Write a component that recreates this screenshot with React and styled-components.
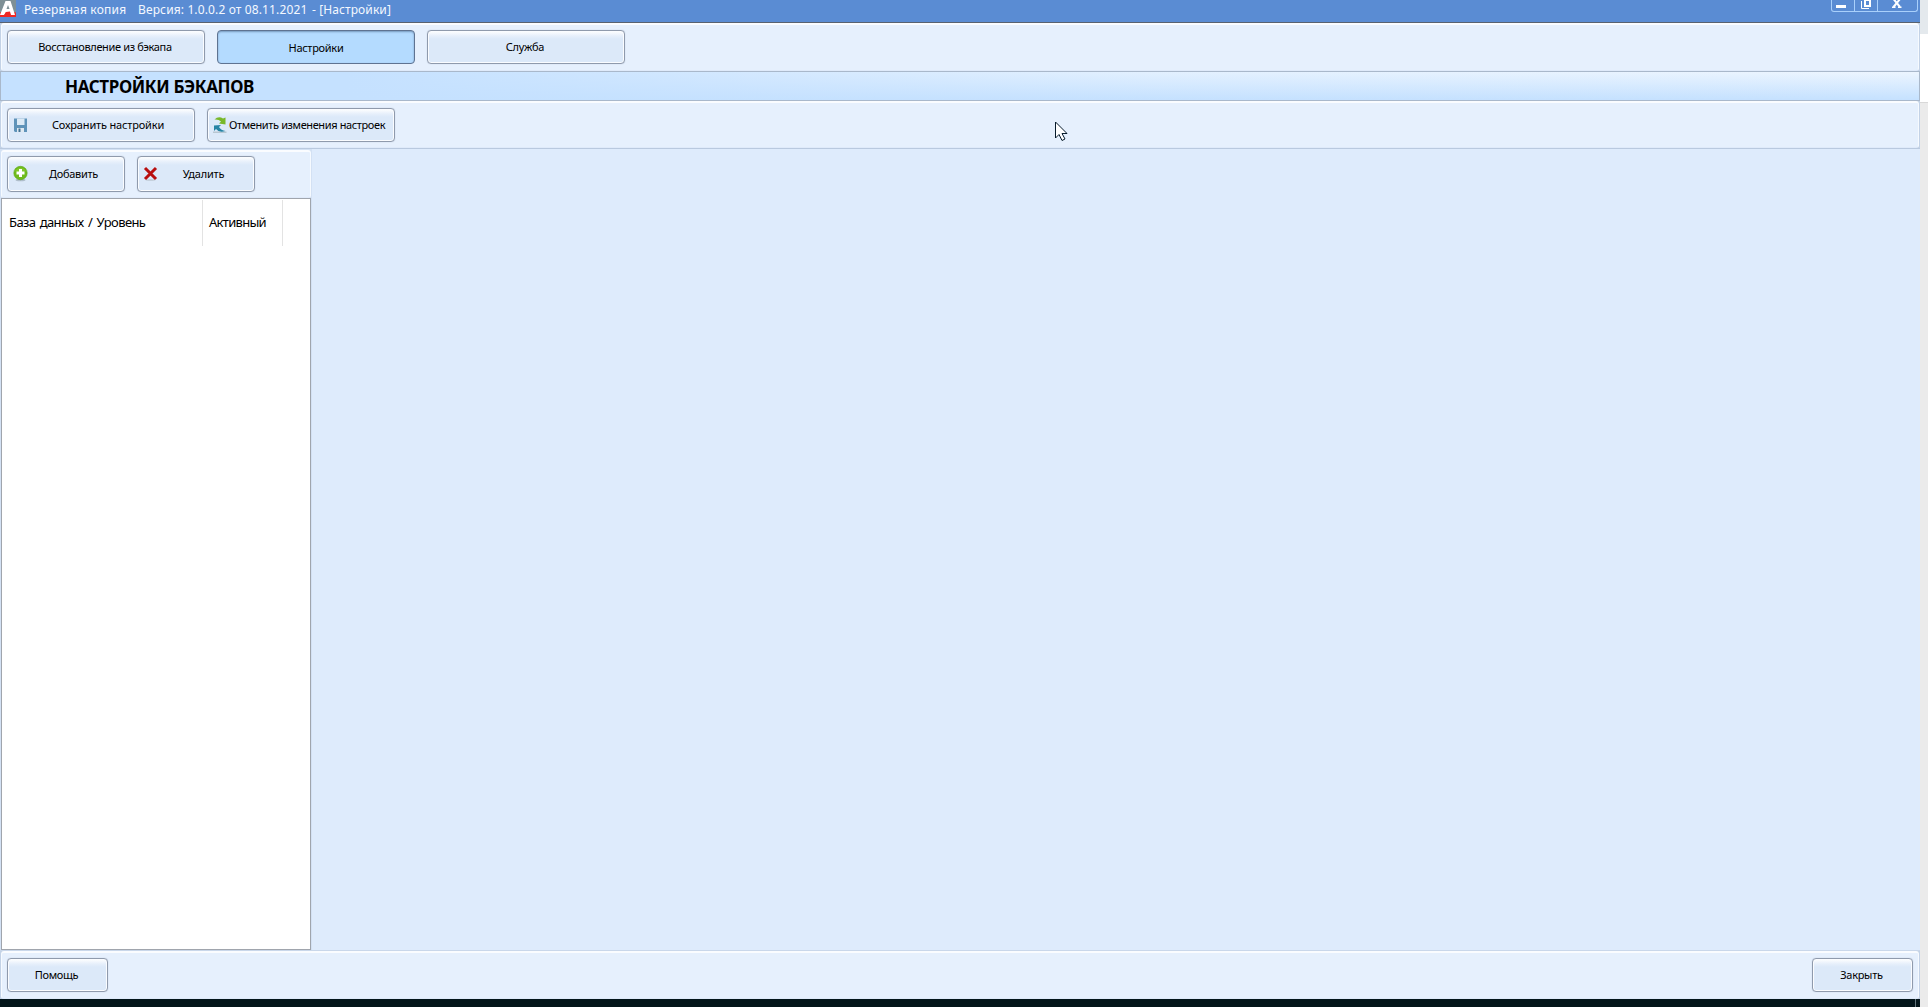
import React from 'react';
import styled, { createGlobalStyle, css } from 'styled-components';

const GlobalStyle = createGlobalStyle`
  * {
    box-sizing: border-box;
  }
  body {
    margin: 0;
    overflow: hidden;
    background: #ebebeb;
    font-family: 'Noto Sans', 'Open Sans', sans-serif;
    color: #000;
  }
`;

const Screen = styled.div`
  width: 1928px;
  height: 1007px;
  display: flex;
`;

const AppWindow = styled.div`
  width: 1920px;
  height: 1007px;
  display: flex;
  flex-direction: column;
  background: #c3d2e6;
`;

const Edge = styled.div`
  width: 8px;
  background: linear-gradient(
    #e4e9ed 0 34px,
    #ffffff 34px 102px,
    #d8d8d8 102px 103px,
    #ebebeb 103px
  );
`;

const TitleBar = styled.div`
  height: 23px;
  flex: none;
  display: flex;
  align-items: flex-start;
  background: #5a8cd3;
  border-bottom: 1px solid #59626f;
`;

const TitleText = styled.div`
  margin-left: 8px;
  width: ${(p) => p.$width}px;
  height: 20px;
  line-height: 19px;
  font-size: 12px;
  letter-spacing: ${(p) => p.$spacing || 0}px;
  color: #f4f8ff;
  white-space: nowrap;
`;

const WindowControls = styled.div`
  display: flex;
  margin-left: auto;
  margin-right: 2px;
  width: 87px;
  height: 12px;
  border: 1px solid #a9d0fb;
  border-top: none;
  border-radius: 0 0 3px 3px;
`;

const Control = styled.div`
  width: ${(p) => p.$width}px;
  height: 11px;
  display: flex;
  padding-left: ${(p) => p.$left}px;
  border-right: ${(p) => (p.$last ? 'none' : '1px solid #a9d0fb')};
`;

const Toolbar = styled.div`
  height: ${(p) => p.$height}px;
  flex: none;
  display: flex;
  align-items: flex-start;
  gap: 12px;
  margin: 0 1px;
  padding: ${(p) => p.$top}px 5px 0;
  background: #e6f0fd;
  border: 1px solid #f6faff;
  border-top: 2px solid #fafcff;
  border-bottom: 1px solid #dfeafa;
  border-radius: 3px;
`;

const Band = styled.div`
  height: 30px;
  flex: none;
  padding-left: 64px;
  border: 1px solid #a9b8cb;
  background:
    linear-gradient(to right, #c5e1ff 18%, rgba(197, 225, 255, 0.25) 60%, rgba(197, 225, 255, 0) 100%),
    linear-gradient(#ecf5ff, #c5e1ff);
`;

const BandTitle = styled.h1`
  margin: 0;
  font-size: 17px;
  line-height: 29px;
  font-weight: 700;
  letter-spacing: -0.38px;
`;

const Button = styled.button`
  width: ${(p) => p.$width}px;
  height: ${(p) => p.$height || 34}px;
  flex: none;
  display: flex;
  align-items: center;
  padding: 0 0 1px 5px;
  border: 1px solid #8f9aac;
  border-radius: 4px;
  background: linear-gradient(#ffffff 0, #e6effb 5px, #dce9f9 8px);
  box-shadow: inset 0 0 0 1px #fafcff, 0 0 1px #a9b5c6;
  font-family: inherit;
  font-size: 11px;
  color: #000;

  ${(p) =>
    p.$active &&
    css`
      padding-top: 2px;
      border-color: #5f7391;
      background: #b4dbff;
      box-shadow: inset 0 1px 2px #7597bc;
    `}
`;

const ButtonIcon = styled.span`
  width: 16px;
  height: 18px;
  flex: none;
  display: flex;
  align-items: center;
`;

const Label = styled.span`
  flex: 1;
  text-align: center;
  white-space: nowrap;
  line-height: 14px;
  letter-spacing: ${(p) => p.$spacing || 0}px;
  padding-right: ${(p) => p.$right ?? 7}px;
`;

const Content = styled.div`
  flex: none;
  height: 803px;
  display: flex;
  background: #deebfc;
  border-top: 1px solid #b9c9df;
  border-bottom: 1px solid #c9d7ea;
`;

const SidePanel = styled.div`
  width: 312px;
  display: flex;
  flex-direction: column;
  background: #d3e1f4;
  padding-top: 1px;
`;

const List = styled.div`
  width: 310px;
  height: 752px;
  margin-left: 1px;
  background: #fff;
  border: 1px solid #a0a5ad;
`;

const ListHeader = styled.div`
  display: flex;
  height: 47px;
  padding-top: 1px;
`;

const HeaderCell = styled.div`
  width: ${(p) => p.$width}px;
  padding-left: ${(p) => p.$left}px;
  border-right: 1px solid #e3e3e3;
  font-size: 13px;
  line-height: 45px;
  letter-spacing: ${(p) => p.$spacing || 0}px;
  word-spacing: 1.5px;
  white-space: nowrap;
`;

const Footer = styled(Toolbar)`
  justify-content: space-between;
`;

const Desktop = styled.div`
  flex: 1;
  display: flex;
  justify-content: flex-end;
  padding-right: 4px;
  background: #03151a;

  &::after {
    content: '';
    width: 1px;
    background: #63757b;
  }
`;

const Pointer = styled.svg`
  position: absolute;
  left: 1055px;
  top: 121px;
`;

const LogoIcon = () => (
  <svg width="16" height="18" viewBox="0 0 16 18">
    <rect width="16" height="17" fill="#7e9096" />
    <path d="M0 12.500Q8 10 16 12.500V17H0Z" fill="#ef2723" />
    <path d="M5.500 1h5L15 15h-4.500l-1-3H6l-2 3H0z" fill="#fff" />
    <path d="M8 5L6.500 9H9.500z" fill="#7e9096" />
    <path d="M6 12l4-.5 1 3.500H4.500z" fill="#ef2723" />
  </svg>
);

const SaveIcon = () => (
  <svg width="15" height="16" viewBox="0 0 15 16">
    <path d="M1 1.500h13V15H2l-1-1z" fill="#5f93b9" />
    <path d="M4 1.500h7.500V8H4z" fill="#dceaf6" />
    <path d="M4 11h7v4H4z" fill="#dfe9f1" />
    <path d="M5.500 11.500h2V15h-2z" fill="#447394" />
  </svg>
);

const RevertIcon = () => (
  <svg width="15" height="18" viewBox="0 0 15 18">
    <path d="M0 15.500h13.500V17H0z" fill="#b9c7d2" />
    <path d="M1.500 3.500Q5.500-.5 10 2.500L12.500 1.500V8.500L6 7.500 8 5.500Q5.500 3 1.500 3.500z" fill="#78b829" />
    <path d="M1 9.500L8 9 6 11Q8 14.500 12.500 15Q6 17 3 13L1 15z" fill="#2684a5" />
  </svg>
);

const AddIcon = () => (
  <svg width="15" height="17" viewBox="0 0 15 17">
    <ellipse cx="7.500" cy="15" rx="5" ry="1.300" fill="#aebdca" />
    <circle cx="7.500" cy="8" r="6.700" fill="#6fbb1c" stroke="#58a812" strokeWidth=".6" />
    <path d="M2 6a6 5 0 0 1 11 0q-5 3-11 0z" fill="#8bd034" opacity=".6" />
    <path d="M6 4h3v2.500h2.500v3H9V12H6V9.500H3.500v-3H6z" fill="#fff" />
  </svg>
);

const DeleteIcon = () => (
  <svg width="15" height="17" viewBox="0 0 15 17">
    <ellipse cx="7.500" cy="15" rx="5" ry="1" fill="#c5d0dc" />
    <path d="M2 3l11 11M13 3L2 14" stroke="#b80f0f" strokeWidth="3" />
  </svg>
);

const App = () => {
  return (
    <Screen>
      <GlobalStyle />
      <AppWindow>
        <TitleBar>
          <LogoIcon />
          <TitleText $width={106} $spacing={0.2}>Резервная копия</TitleText>
          <TitleText $width={166} $spacing={0.13}>Версия: 1.0.0.2 от 08.11.2021</TitleText>
          <TitleText $width={90} $spacing={0.1}>- [Настройки]</TitleText>
          <WindowControls>
            <Control $width={23} $left={3}>
              <svg width="12" height="9" viewBox="0 0 12 9">
                <path d="M1 5h10v3H1z" fill="#fff" />
              </svg>
            </Control>
            <Control $width={23} $left={5}>
              <svg width="12" height="10" viewBox="0 0 12 10">
                <path d="M1.500 1v7.500H9" fill="none" stroke="#fff" />
                <path d="M4 -1h7v8H4zM6 1v4h3V1z" fill="#fff" fillRule="evenodd" />
              </svg>
            </Control>
            <Control $width={39} $left={14} $last>
              <svg width="10" height="9" viewBox="0 0 10 9">
                <path d="M1.500 -1l6.500 8M8 -1L1.500 7" stroke="#fff" strokeWidth="2" />
                <path d="M0 7.300h3.500M6 7.300h3.500" stroke="#fff" strokeWidth="1.500" />
              </svg>
            </Control>
          </WindowControls>
        </TitleBar>

        <Toolbar $height={48} $top={5}>
          <Button $width={198}>
            <Label $spacing={-0.35}>Восстановление из бэкапа</Label>
          </Button>
          <Button $width={198} $active>
            <Label $spacing={-0.3} $right={5}>Настройки</Label>
          </Button>
          <Button $width={198}>
            <Label $spacing={-0.3}>Служба</Label>
          </Button>
        </Toolbar>

        <Band>
          <BandTitle>НАСТРОЙКИ БЭКАПОВ</BandTitle>
        </Band>

        <Toolbar $height={47} $top={5}>
          <Button $width={188}>
            <ButtonIcon><SaveIcon /></ButtonIcon>
            <Label $spacing={-0.17}>Сохранить настройки</Label>
          </Button>
          <Button $width={188}>
            <ButtonIcon><RevertIcon /></ButtonIcon>
            <Label $spacing={-0.38} $right={12}>Отменить изменения настроек</Label>
          </Button>
        </Toolbar>

        <Content>
          <SidePanel>
            <Toolbar $height={48} $top={4}>
              <Button $width={118} $height={36}>
                <ButtonIcon><AddIcon /></ButtonIcon>
                <Label $spacing={-0.3} $right={6}>Добавить</Label>
              </Button>
              <Button $width={118} $height={36}>
                <ButtonIcon><DeleteIcon /></ButtonIcon>
                <Label $spacing={-0.2} $right={6}>Удалить</Label>
              </Button>
            </Toolbar>
            <List>
              <ListHeader>
                <HeaderCell $width={201} $left={7} $spacing={-0.6}>База данных / Уровень</HeaderCell>
                <HeaderCell $width={80} $left={6} $spacing={-0.7}>Активный</HeaderCell>
              </ListHeader>
            </List>
          </SidePanel>
        </Content>

        <Footer $height={48} $top={5}>
          <Button $width={101}>
            <Label $spacing={-0.3}>Помощь</Label>
          </Button>
          <Button $width={101}>
            <Label $spacing={-0.3}>Закрыть</Label>
          </Button>
        </Footer>
        <Desktop />
      </AppWindow>
      <Edge />
      <Pointer width="13" height="20" viewBox="0 0 13 20">
        <path
          d="M.5 1v16l3.500-3.500L7 19.500l3-1.500-3-5.500h5z"
          fill="#fff"
          stroke="#071b2b"
        />
      </Pointer>
    </Screen>
  );
};

export default App;
